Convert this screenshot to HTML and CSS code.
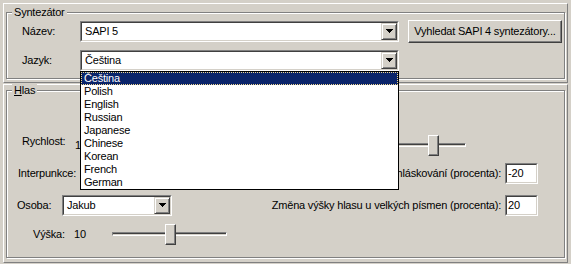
FILE: index.html
```html
<!DOCTYPE html>
<html lang="cs">
<head>
  <meta charset="UTF-8" />
  <title>Syntezátor</title>
  <link rel="stylesheet" href="styles.css">
</head>
<body>
  <!-- Synthesizer panel -->
  <div class="panel panel--top">
    <div class="group group--synth">
      <span class="group__title">Syntezátor</span>

      <div class="row">
        <span class="lbl lbl--synth">Název:</span>
        <div class="combo combo--wide">
          <div class="field">
            <span class="combo__text">SAPI 5</span>
            <span class="combo__btn"><svg width="7" height="4" viewBox="0 0 7 4"><path d="M0 0h7v1h-1v1h-1v1h-1v1h-1v-1h-1v-1h-1v-1h-1z"/></svg></span>
          </div>
        </div>
        <button class="btn">Vyhledat SAPI 4 syntezátory...</button>
      </div>

      <div class="row">
        <span class="lbl lbl--synth">Jazyk:</span>
        <div class="combo combo--wide">
          <div class="field">
            <span class="combo__text">Čeština</span>
            <span class="combo__btn"><svg width="7" height="4" viewBox="0 0 7 4"><path d="M0 0h7v1h-1v1h-1v1h-1v1h-1v-1h-1v-1h-1v-1h-1z"/></svg></span>
          </div>
          <!-- open dropdown -->
          <ul class="listbox">
            <li class="listbox__item is-selected">Čeština</li>
            <li class="listbox__item">Polish</li>
            <li class="listbox__item">English</li>
            <li class="listbox__item">Russian</li>
            <li class="listbox__item">Japanese</li>
            <li class="listbox__item">Chinese</li>
            <li class="listbox__item">Korean</li>
            <li class="listbox__item">French</li>
            <li class="listbox__item">German</li>
          </ul>
        </div>
      </div>
    </div>
  </div>

  <!-- Voice panel -->
  <div class="panel panel--voice">
    <div class="group group--voice">
      <span class="group__title"><u>H</u>las</span>

      <div class="vrow vrow--speed">
        <span class="lbl lbl--speed">Rychlost:</span>
        <span class="val">10</span>
        <div class="slider slider--speed">
          <div class="slider__track"></div>
          <div class="slider__thumb" style="left:316px"></div>
        </div>
      </div>

      <div class="vrow vrow--punct">
        <span class="lbl lbl--punct">Interpunkce:</span>
        <div class="combo combo--punct">
          <div class="field">
            <span class="combo__btn"><svg width="7" height="4" viewBox="0 0 7 4"><path d="M0 0h7v1h-1v1h-1v1h-1v1h-1v-1h-1v-1h-1v-1h-1z"/></svg></span>
          </div>
        </div>
        <div class="vrow__right">
          <span>Změna rychlosti při hláskování (procenta):</span>
          <div class="edit"><div class="field">-20</div></div>
        </div>
      </div>

      <div class="vrow vrow--person">
        <span class="lbl lbl--person">Osoba:</span>
        <div class="combo combo--person">
          <div class="field">
            <span class="combo__text">Jakub</span>
            <span class="combo__btn"><svg width="7" height="4" viewBox="0 0 7 4"><path d="M0 0h7v1h-1v1h-1v1h-1v1h-1v-1h-1v-1h-1v-1h-1z"/></svg></span>
          </div>
        </div>
        <div class="vrow__right">
          <span>Změna výšky hlasu u velkých písmen (procenta):</span>
          <div class="edit"><div class="field">20</div></div>
        </div>
      </div>

      <div class="vrow vrow--pitch">
        <span class="lbl lbl--pitch">Výška:</span>
        <span class="val val--pitch">10</span>
        <div class="slider slider--pitch">
          <div class="slider__track"></div>
          <div class="slider__thumb" style="left:53px"></div>
        </div>
      </div>
    </div>
  </div>
</body>
</html>
```

FILE: styles.css
```css
*{margin:0;padding:0;box-sizing:border-box;}
body{
  background:#d4d0c8;color:#000;
  font:11px/13px "Liberation Sans",Arial,sans-serif;letter-spacing:-.2px;
  width:571px;height:264px;overflow:hidden;
}

/* raised panels + etched group boxes */
.panel{
  margin-left:3px;width:565px;
  border:1px solid;border-color:#fff #808080 #808080 #fff;
}
.panel--top{margin-top:3px;height:80px;}
.panel--voice{margin-top:1px;height:179px;}
.group{
  position:relative;margin-left:2px;width:559px;
  border:1px solid #808080;
  box-shadow:inset 1px 1px #fff,1px 1px #fff;
}
.group--synth{margin-top:8px;height:67px;padding:6px 0 0 15px;}
.group--voice{margin-top:5px;height:168px;padding-top:43px;}
.group__title{
  position:absolute;top:-7px;left:5px;
  padding:0 2px;background:#d4d0c8;
}

/* synth rows */
.row{display:flex;align-items:center;height:24px;}
.row + .row{margin-top:5px;}
.lbl{white-space:nowrap;}
.lbl--synth{width:58px;}

/* sunken fields */
.combo,.edit{
  position:relative;height:21px;
  border:1px solid;border-color:#808080 #fff #fff #808080;
}
.field{
  display:flex;align-items:center;height:100%;
  background:#fff;
  border:1px solid;border-color:#404040 #d4d0c8 #d4d0c8 #404040;
}
.combo--wide{width:319px;}
.combo--punct{width:120px;}
.combo--person{width:110px;}
.combo__text{padding-left:3px;white-space:nowrap;}
.combo__btn{
  margin-left:auto;width:16px;height:17px;
  display:flex;align-items:center;justify-content:center;
  background:#d4d0c8;
  border:1px solid;border-color:#d4d0c8 #404040 #404040 #d4d0c8;
  box-shadow:inset 1px 1px #fff,inset -1px -1px #808080;
}
.combo__btn svg{display:block;}
.edit{width:33px;}
.edit .field{padding-left:1px;}

.btn{
  margin-left:9px;width:154px;height:23px;
  background:#d4d0c8;font:inherit;letter-spacing:inherit;color:#000;
  border:1px solid;border-color:#fff #404040 #404040 #fff;
  box-shadow:inset -1px -1px #808080;
}

/* dropdown list */
.listbox{
  position:absolute;z-index:10;
  top:calc(100% + 1px);left:-1px;width:319px;
  list-style:none;background:#fff;border:1px solid #000;
}
.listbox__item{height:13px;line-height:13px;padding-left:3px;}
.listbox__item.is-selected{
  background:#0a246a;color:#fff;
  outline:1px dotted #f0d890;outline-offset:-1px;
}

/* voice rows */
.vrow{display:flex;align-items:center;height:22px;padding-right:26px;}
.vrow--speed{margin-left:15px;}
.vrow--punct{margin-left:11px;margin-top:6px;}
.vrow--person{margin-left:10px;margin-top:10px;}
.vrow--pitch{margin-left:26px;margin-top:7px;}
.vrow__right{margin-left:auto;display:flex;align-items:center;gap:4px;white-space:nowrap;}
.lbl--speed{width:53px;margin-bottom:8px;}
.lbl--punct{width:62px;}
.lbl--person{width:45px;}
.lbl--pitch{width:41px;}
.val{width:37px;}
.val--pitch{width:38px;}

/* trackbars */
.slider{position:relative;height:21px;}
.slider--speed{width:354px;}
.slider--pitch{width:115px;}
.slider__track{
  position:absolute;left:0;right:0;top:8px;height:4px;
  border:1px solid;border-color:#808080 #fff #fff #808080;
  background:linear-gradient(#404040 50%,#d4d0c8 50%);
}
.slider__thumb{
  position:absolute;top:0;width:11px;height:21px;
  background:#d4d0c8;
  border:1px solid;border-color:#fff #404040 #404040 #fff;
  box-shadow:inset -1px -1px #808080;
}
```
